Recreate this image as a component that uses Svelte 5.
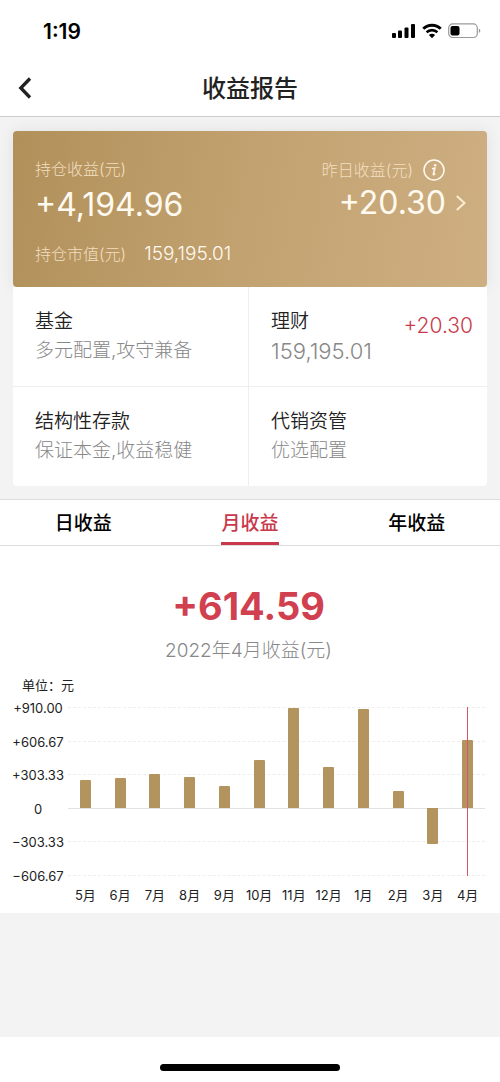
<script lang="ts">
    type Product = { name: string; note: string; gain?: string };
    type Month = { label: string; value: number };

    const products: Product[] = [
        { name: '基金', note: '多元配置,攻守兼备' },
        { name: '理财', note: '159,195.01', gain: '+20.30' },
        { name: '结构性存款', note: '保证本金,收益稳健' },
        { name: '代销资管', note: '优选配置' },
    ];

    const tabs: string[] = ['日收益', '月收益', '年收益'];
    let activeTab = $state(1);

    const axisLabels: string[] = ['+910.00', '+606.67', '+303.33', '0', '−303.33', '−606.67'];
    const maxGain = 910;
    const maxLoss = 606.67;

    const months: Month[] = [
        { label: '5月', value: 253 },
        { label: '6月', value: 277 },
        { label: '7月', value: 307 },
        { label: '8月', value: 284 },
        { label: '9月', value: 203 },
        { label: '10月', value: 430 },
        { label: '11月', value: 905 },
        { label: '12月', value: 370 },
        { label: '1月', value: 888 },
        { label: '2月', value: 155 },
        { label: '3月', value: -318 },
        { label: '4月', value: 614.59 },
    ];
    let selected = $state(11);

    function barHeight(value: number, max: number): number {
        return Math.max(0, value) / max * 100;
    }
</script>

<div class="page">
    <div class="status">
        <span class="time">1:19</span>
        <div class="status-icons">
            <svg width="24" height="16" viewBox="0 0 24 16" aria-hidden="true">
                <rect x="0" y="10" width="4" height="5" rx="1" />
                <rect x="6" y="7.500" width="4" height="7.500" rx="1" />
                <rect x="12.500" y="4.500" width="4" height="10.500" rx="1" />
                <rect x="19" y="1" width="4" height="14" rx="1" />
            </svg>
            <svg width="20" height="16" viewBox="0 0 20 16" aria-hidden="true">
                <path d="M1.300 5.800a12.500 12.500 0 0 1 17.400 0" fill="none" stroke="#000" stroke-width="2.900" />
                <path d="M4.600 9.300a7.800 7.800 0 0 1 10.800 0" fill="none" stroke="#000" stroke-width="2.600" />
                <path d="M10 15.200 6.900 12a4.400 4.400 0 0 1 6.200 0z" />
            </svg>
            <svg width="33" height="16" viewBox="0 0 33 16" aria-hidden="true">
                <rect x="0.700" y="0.900" width="28.600" height="13.600" rx="4" fill="#fff" stroke="#999" stroke-width="1.200" />
                <rect x="2.500" y="2.900" width="9" height="9.600" rx="2" />
                <path d="M30.800 5.500c2 .8 2 3.700 0 4.500z" fill="#999" />
            </svg>
        </div>
    </div>

    <header class="nav">
        <button class="back" aria-label="返回">
            <svg width="14" height="22" viewBox="0 0 14 22" aria-hidden="true">
                <path d="M12 1.500 2.800 11l9.200 9.500" fill="none" stroke="#222" stroke-width="3.300" />
            </svg>
        </button>
        <h1>收益报告</h1>
    </header>

    <section class="overview">
        <div class="card">
            <div class="holding">
                <span class="caption">持仓收益(元)</span>
                <span class="amount">+4,194.96</span>
                <div class="market">
                    <span class="caption">持仓市值(元)</span>
                    <span class="market-value">159,195.01</span>
                </div>
            </div>
            <div class="yesterday">
                <div class="yesterday-head">
                    <span class="caption">昨日收益(元)</span>
                    <button class="info" aria-label="说明">
                        <svg width="22" height="22" viewBox="0 0 22 22" aria-hidden="true">
                            <circle cx="11" cy="11" r="10" fill="none" stroke="#fffaf0" stroke-width="1.500" />
                            <circle cx="12.200" cy="6.300" r="1.300" fill="#fffaf0" />
                            <path d="M9 9.900c1-.3 1.900-.6 2.900-.8l-1.600 6.100c-.2.900.6.800 1.800-.6" fill="none" stroke="#fffaf0" stroke-width="1.500" />
                        </svg>
                    </button>
                </div>
                <a class="yesterday-link" href="#detail">
                    <span class="amount">+20.30</span>
                    <svg width="12" height="18" viewBox="0 0 12 18" aria-hidden="true">
                        <path d="M1.800 2 9.500 9l-7.700 7" fill="none" stroke="#fbecd3" stroke-width="2" />
                    </svg>
                </a>
            </div>
        </div>

        <div class="products">
            {#each products as product}
                <a class="product" href="#product">
                    <div>
                        <p class="name">{product.name}</p>
                        <p class="note" class:value={product.gain}>{product.note}</p>
                    </div>
                    {#if product.gain}
                        <span class="gain">{product.gain}</span>
                    {/if}
                </a>
            {/each}
        </div>
    </section>

    <nav class="tabs">
        {#each tabs as tab, i}
            <button class="tab" class:active={activeTab === i} onclick={() => (activeTab = i)}>
                <span>{tab}</span>
            </button>
        {/each}
    </nav>

    <section class="report">
        <p class="total">+614.59</p>
        <p class="period">2022年4月收益(元)</p>

        <p class="unit">单位：元</p>
        <div class="chart">
            <div class="axis">
                {#each axisLabels as label}
                    <span>{label}</span>
                {/each}
            </div>
            <div class="plot">
                <div class="lines">
                    {#each axisLabels as label}
                        <div class="line" class:zero={label === '0'}></div>
                    {/each}
                </div>
                <div class="bars">
                    {#each months as month, i}
                        <button class="column" aria-label={month.label} onclick={() => (selected = i)}>
                            <span class="gain-area">
                                <span class="bar" style="height: {barHeight(month.value, maxGain)}%"></span>
                            </span>
                            <span class="loss-area">
                                <span class="bar" style="height: {barHeight(-month.value, maxLoss)}%"></span>
                            </span>
                            {#if selected === i}
                                <span class="marker"></span>
                            {/if}
                        </button>
                    {/each}
                </div>
            </div>
            <div class="months">
                {#each months as month}
                    <span>{month.label}</span>
                {/each}
            </div>
        </div>
    </section>

    <footer class="home">
        <div class="home-bar"></div>
    </footer>
</div>

<style>
    :global(body) {
        margin: 0;
        background: #f3f3f3;
    }
    .page {
        min-height: 100vh;
        display: flex;
        flex-direction: column;
        background: #f3f3f3;
        color: #222;
        font-family: Inter, "Noto Sans CJK SC", sans-serif;
    }
    p, h1 {
        margin: 0;
    }
    button {
        padding: 0;
        border: none;
        background: none;
        font: inherit;
        color: inherit;
    }
    a {
        color: inherit;
        text-decoration: none;
    }
    svg {
        display: block;
    }

    .status {
        height: 60px;
        box-sizing: border-box;
        padding: 2px 19px 0 43px;
        display: flex;
        justify-content: space-between;
        align-items: center;
        background: #fff;
    }
    .time {
        font-size: 21px;
        font-weight: 600;
        color: #000;
    }
    .status-icons {
        display: flex;
        gap: 6px;
    }

    .nav {
        height: 57px;
        box-sizing: border-box;
        padding: 0 18px;
        display: grid;
        grid-template-columns: 24px 1fr 24px;
        align-items: center;
        background: #fff;
        border-bottom: 1px solid #ccc;
    }
    h1 {
        padding-top: 2px;
        font-size: 24px;
        font-weight: 500;
        line-height: 32px;
        text-align: center;
    }

    .overview {
        padding: 14px 13px 13px;
    }
    .card {
        padding: 27px 20px 21px 22px;
        display: flex;
        justify-content: space-between;
        border-radius: 4px;
        background: linear-gradient(100deg, #b1905a, #c2a270 50%, #ceaf82);
        box-shadow: 0 0 16px rgba(0, 0, 0, 0.08);
        color: #fffaf0;
    }
    .holding {
        display: flex;
        flex-direction: column;
    }
    .caption {
        font-size: 16px;
        font-weight: 300;
        line-height: 22px;
        color: #f2dfc0;
    }
    .amount {
        font-size: 32px;
        line-height: 40px;
    }
    .holding .amount {
        margin: 5px 0 17px;
    }
    .market {
        display: flex;
        align-items: center;
        gap: 18px;
    }
    .market-value {
        font-size: 19px;
        font-weight: 350;
        line-height: 24px;
    }
    .yesterday {
        padding-top: 1px;
        display: flex;
        flex-direction: column;
        align-items: flex-end;
        gap: 2px;
    }
    .yesterday-head {
        display: flex;
        align-items: center;
        gap: 10px;
        padding-right: 22px;
    }
    .yesterday-link {
        display: flex;
        align-items: center;
        gap: 9px;
    }

    .products {
        display: grid;
        grid-template-columns: 235fr 238fr;
        gap: 1px;
        background: #eee;
        border-radius: 0 0 4px 4px;
        overflow: hidden;
    }
    .product {
        padding: 21px 14px 20px 22px;
        display: flex;
        justify-content: space-between;
        background: #fff;
    }
    .name {
        font-size: 19px;
        font-weight: 350;
        line-height: 28px;
    }
    .note {
        font-size: 19px;
        font-weight: 300;
        line-height: 30px;
        color: #888;
    }
    .note.value {
        font-size: 22px;
    }
    .gain {
        font-size: 21px;
        font-weight: 350;
        line-height: 36px;
        color: #c9394b;
    }

    .tabs {
        display: grid;
        grid-template-columns: repeat(3, 1fr);
        background: #fff;
        border-top: 1px solid #ddd;
        border-bottom: 1px solid #ddd;
    }
    .tab {
        display: flex;
        justify-content: center;
        padding-top: 6px;
        font-size: 19px;
        font-weight: 500;
        line-height: 36px;
        color: #000;
    }
    .tab span {
        border-bottom: 3px solid transparent;
    }
    .tab.active span {
        color: #c9394b;
        border-bottom-color: #c9394b;
    }

    .report {
        padding: 36px 15px 8px 12px;
        background: #fff;
    }
    .total {
        font-size: 38px;
        font-weight: 700;
        line-height: 48px;
        text-align: center;
        color: #d1404f;
    }
    .period {
        margin-top: 7px;
        font-size: 19px;
        font-weight: 300;
        line-height: 28px;
        text-align: center;
        color: #888;
    }
    .unit {
        margin: 10px 0 4px 10px;
        font-size: 13px;
        line-height: 20px;
    }
    .chart {
        display: grid;
        grid-template-columns: 52px 1fr;
        column-gap: 4px;
    }
    .axis {
        height: 186px;
        display: flex;
        flex-direction: column;
        justify-content: space-between;
        text-align: center;
        font-size: 13px;
        line-height: 18px;
    }
    .plot {
        display: grid;
        padding: 8px 0 9px;
    }
    .lines, .bars {
        grid-area: 1 / 1;
        display: flex;
    }
    .lines {
        flex-direction: column;
        justify-content: space-between;
    }
    .line {
        border-top: 1px dashed #eee;
    }
    .line.zero {
        border-top: 1px solid #e2e2e2;
    }
    .column {
        flex: 1;
        display: grid;
        grid-template-columns: 1fr;
        grid-template-rows: 3fr 2fr;
    }
    .gain-area, .loss-area {
        grid-column: 1;
        display: flex;
        justify-content: center;
    }
    .gain-area {
        grid-row: 1;
        align-items: flex-end;
    }
    .loss-area {
        grid-row: 2;
        align-items: flex-start;
    }
    .bar {
        width: 11px;
        border-radius: 1px 1px 0 0;
        background: #b3945f;
    }
    .loss-area .bar {
        border-radius: 0 0 1px 1px;
    }
    .marker {
        grid-area: 1 / 1 / 3 / 2;
        justify-self: center;
        border-left: 1px solid #d8566a;
    }
    .months {
        grid-column: 2;
        display: grid;
        grid-template-columns: repeat(12, 1fr);
        text-align: center;
        font-size: 13px;
        line-height: 20px;
        white-space: nowrap;
    }

    .home {
        margin-top: auto;
        padding: 27px 0 11px;
        display: flex;
        justify-content: center;
        background: #fff;
    }
    .home-bar {
        width: 36%;
        height: 7px;
        border-radius: 4px;
        background: #000;
    }
</style>
